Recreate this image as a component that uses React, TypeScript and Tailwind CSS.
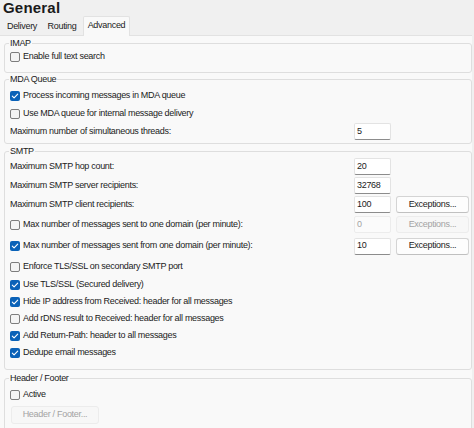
import React from 'react';

type Row =
  | { kind: 'check'; label: string; checked: boolean; h: number }
  | { kind: 'field'; label: string; value: string; h: number; check?: boolean; checked?: boolean; button?: boolean; disabled?: boolean };

const smtpRows: Row[] = [
  { kind: 'field', label: 'Maximum SMTP hop count:', value: '20', h: 19 },
  { kind: 'field', label: 'Maximum SMTP server recipients:', value: '32768', h: 19 },
  { kind: 'field', label: 'Maximum SMTP client recipients:', value: '100', h: 19, button: true },
  { kind: 'field', label: 'Max number of messages sent to one domain (per minute):', value: '0', h: 21, check: true, checked: false, button: true, disabled: true },
  { kind: 'field', label: 'Max number of messages sent from one domain (per minute):', value: '10', h: 22, check: true, checked: true, button: true },
  { kind: 'check', label: 'Enforce TLS/SSL on secondary SMTP port', checked: false, h: 19 },
  { kind: 'check', label: 'Use TLS/SSL (Secured delivery)', checked: true, h: 17 },
  { kind: 'check', label: 'Hide IP address from Received: header for all messages', checked: true, h: 17 },
  { kind: 'check', label: 'Add rDNS result to Received: header for all messages', checked: false, h: 17 },
  { kind: 'check', label: 'Add Return-Path: header to all messages', checked: true, h: 17 },
  { kind: 'check', label: 'Dedupe email messages', checked: true, h: 17 },
];

function Box({ checked }: { checked: boolean }) {
  if (checked) {
    return (
      <span className="w-[10px] h-[10px] shrink-0 rounded-[2px] bg-[#0a62b8] flex items-center justify-center">
        <svg width="8" height="8" viewBox="0 0 8 8">
          <path d="M1.3 4.2 L3.1 5.9 L6.7 2.1" fill="none" stroke="#fff" strokeWidth="1.1" strokeLinecap="round" strokeLinejoin="round" />
        </svg>
      </span>
    );
  }
  return <span className="w-[10px] h-[10px] shrink-0 rounded-[2px] border border-[#7d7d7d] bg-[#f4f4f4]" />;
}

function Check({ label, checked }: { label: string; checked: boolean }) {
  return (
    <div className="flex items-center gap-[3px]">
      <Box checked={checked} />
      <span className="whitespace-nowrap">{label}</span>
    </div>
  );
}

function Input({ value, disabled }: { value: string; disabled?: boolean }) {
  return (
    <div
      className={
        disabled
          ? 'w-[37px] h-[17px] border border-[#ececec] bg-[#fbfbfb] text-[#a3a3a3] pl-[2px] flex items-center rounded-[2px]'
          : 'w-[37px] h-[17px] border border-[#e3e3e3] border-b-[#8c8c8c] bg-white pl-[2px] flex items-center rounded-[2px]'
      }
    >
      {value}
    </div>
  );
}

function Btn({ label, disabled, className = '' }: { label: string; disabled?: boolean; className?: string }) {
  return (
    <div
      className={
        (disabled
          ? 'border border-[#ececec] bg-[#f7f7f7] text-[#a3a3a3] '
          : 'border border-[#d4d4d4] border-b-[#c0c0c0] bg-[#fdfdfd] ') +
        'h-[17px] rounded-[3px] flex items-center justify-center ' +
        className
      }
    >
      {label}
    </div>
  );
}

function Group({ title, className = '', children }: { title: string; className?: string; children: React.ReactNode }) {
  return (
    <fieldset className={'border border-[#dedede] rounded-[3px] pl-[5px] pr-[2px] ' + className}>
      <legend className="px-[1px] -ml-[1px] leading-[10px]">{title}</legend>
      {children}
    </fieldset>
  );
}

export default function App() {
  return (
    <div className="w-[474px] h-[428px] overflow-hidden bg-[#f0f0f0] text-[#1b1b1b] text-[9px] tracking-[-0.3px] font-['Liberation_Sans',Arial,sans-serif]">
      <div className="h-[16px] pl-[3px] text-[15px] font-bold leading-[16px] tracking-[0.2px]">General</div>
      <div className="h-[19px] flex items-end pl-[2px]">
        <div className="w-[40px] h-[17px] flex items-center justify-center">Delivery</div>
        <div className="w-[40px] h-[17px] flex items-center justify-center">Routing</div>
        <div className="ml-[1px] w-[47px] h-[20px] -mb-[1px] relative z-10 bg-[#f9f9f9] border border-b-0 border-[#e2e2e2] rounded-t-[2px] flex items-center justify-center pb-[2px]">
          Advanced
        </div>
      </div>
      <div className="mr-[2px] h-[393px] bg-[#f9f9f9] border-t border-[#e2e2e2] pl-[4px] pt-[2px] flex flex-col">
        <Group title="IMAP" className="pb-[6px]">
          <div className="h-[18px] flex items-center">
            <Check label="Enable full text search" checked={false} />
          </div>
        </Group>

        <Group title="MDA Queue" className="mt-[1px] pb-[3px]">
          <div className="mt-[3px] h-[18px] flex items-center">
            <Check label="Process incoming messages in MDA queue" checked />
          </div>
          <div className="h-[18px] flex items-center">
            <Check label="Use MDA queue for internal message delivery" checked={false} />
          </div>
          <div className="h-[17px] flex items-center">
            <span className="flex-1">Maximum number of simultaneous threads:</span>
            <div className="w-[115px]">
              <Input value="5" />
            </div>
          </div>
        </Group>

        <Group title="SMTP" className="mt-[2px] pb-[8px]">
          <div className="mt-[1px] flex flex-col">
            {smtpRows.map((r) =>
              r.kind === 'check' ? (
                <div key={r.label} className="flex items-center" style={{ height: r.h }}>
                  <Check label={r.label} checked={r.checked} />
                </div>
              ) : (
                <div key={r.label} className="flex items-center" style={{ height: r.h }}>
                  <div className="flex-1">
                    {r.check ? <Check label={r.label} checked={!!r.checked} /> : <span>{r.label}</span>}
                  </div>
                  <div className="w-[115px] flex items-center">
                    <Input value={r.value} disabled={r.disabled} />
                    {r.button && <Btn label="Exceptions..." disabled={r.disabled} className="ml-[5px] w-[73px]" />}
                  </div>
                </div>
              )
            )}
          </div>
        </Group>

        <Group title="Header / Footer" className="mt-[3px] pb-[6px]">
          <div className="mt-[3px] h-[18px] flex items-center">
            <Check label="Active" checked={false} />
          </div>
          <Btn label="Header / Footer..." disabled className="mt-[2px] w-[88px] !h-[18px] ml-[1px]" />
        </Group>
      </div>
    </div>
  );
}
